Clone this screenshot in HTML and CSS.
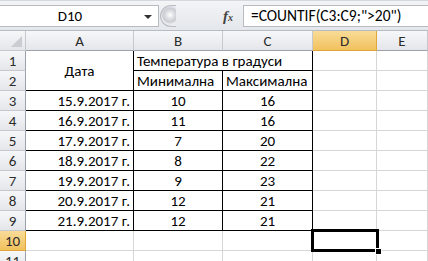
FILE: index.html
```html
<!DOCTYPE html>
<html lang="bg">
<head>
    <meta charset="UTF-8">
    <title>Excel - COUNTIF</title>
    <link rel="stylesheet" href="styles.css">
</head>
<body>
    <div class="formula-bar">
        <div class="name-box">
            <span class="name-value">D10</span>
            <span class="name-arrow"></span>
        </div>
        <div class="grip"></div>
        <div class="fx-area">
            <span class="fx">f<sub>x</sub></span>
        </div>
        <div class="formula-input">=COUNTIF(C3:C9;"&gt;20")</div>
    </div>

    <div class="sheet">
        <!-- column headers -->
        <div class="hdr corner"><span class="corner-tri"></span></div>
        <div class="hdr col">A</div>
        <div class="hdr col">B</div>
        <div class="hdr col">C</div>
        <div class="hdr col active">D</div>
        <div class="hdr col">E</div>

        <!-- rows 1-2 -->
        <div class="hdr row">1</div>
        <div class="cell center merged-a bl-r bl-b">Дата</div>
        <div class="cell merged-bc bl-r bl-b">Температура в градуси</div>
        <div class="cell"></div>
        <div class="cell"></div>

        <div class="hdr row">2</div>
        <div class="cell bl-r bl-b">Минимална</div>
        <div class="cell bl-r bl-b">Максимална</div>
        <div class="cell"></div>
        <div class="cell"></div>

        <div class="hdr row">3</div>
        <div class="cell right bl-r bl-b">15.9.2017 г.</div>
        <div class="cell center bl-r bl-b">10</div>
        <div class="cell center bl-r bl-b">16</div>
        <div class="cell"></div>
        <div class="cell"></div>

        <div class="hdr row">4</div>
        <div class="cell right bl-r bl-b">16.9.2017 г.</div>
        <div class="cell center bl-r bl-b">11</div>
        <div class="cell center bl-r bl-b">16</div>
        <div class="cell"></div>
        <div class="cell"></div>

        <div class="hdr row">5</div>
        <div class="cell right bl-r bl-b">17.9.2017 г.</div>
        <div class="cell center bl-r bl-b">7</div>
        <div class="cell center bl-r bl-b">20</div>
        <div class="cell"></div>
        <div class="cell"></div>

        <div class="hdr row">6</div>
        <div class="cell right bl-r bl-b">18.9.2017 г.</div>
        <div class="cell center bl-r bl-b">8</div>
        <div class="cell center bl-r bl-b">22</div>
        <div class="cell"></div>
        <div class="cell"></div>

        <div class="hdr row">7</div>
        <div class="cell right bl-r bl-b">19.9.2017 г.</div>
        <div class="cell center bl-r bl-b">9</div>
        <div class="cell center bl-r bl-b">23</div>
        <div class="cell"></div>
        <div class="cell"></div>

        <div class="hdr row">8</div>
        <div class="cell right bl-r bl-b">20.9.2017 г.</div>
        <div class="cell center bl-r bl-b">12</div>
        <div class="cell center bl-r bl-b">21</div>
        <div class="cell"></div>
        <div class="cell"></div>

        <div class="hdr row">9</div>
        <div class="cell right bl-r bl-b">21.9.2017 г.</div>
        <div class="cell center bl-r bl-b">12</div>
        <div class="cell center bl-r bl-b">21</div>
        <div class="cell"></div>
        <div class="cell"></div>

        <div class="hdr row active">10</div>
        <div class="cell"></div>
        <div class="cell"></div>
        <div class="cell"></div>
        <div class="cell selected"><span class="sel-box"><span class="fill-handle"></span></span></div>
        <div class="cell"></div>

        <div class="hdr row">11</div>
        <div class="cell"></div>
        <div class="cell"></div>
        <div class="cell"></div>
        <div class="cell"></div>
        <div class="cell"></div>
    </div>
</body>
</html>
```

FILE: styles.css
```css
body {
    margin: 0;
    width: 428px;
    height: 261px;
    overflow: hidden;
    background-color: #ffffff;
    font-family: 'Carlito', 'Noto Sans', 'DejaVu Sans', sans-serif;
    font-size: 15px;
    color: #000000;
}

.formula-bar {
    display: flex;
    height: 30px;
    box-sizing: border-box;
    padding-top: 4px;
    background: linear-gradient(#f3f4f6, #e4e7eb);
    border-top: 1px solid #d5d9de;
}

.name-box {
    position: relative;
    width: 159px;
    height: 22px;
    box-sizing: border-box;
    background-color: #ffffff;
    border: 1px solid #b8bcc2;
    border-left: none;
    display: flex;
    align-items: center;
    justify-content: center;
}

.name-value {
    font-size: 15px;
    margin-left: -18px;
}

.name-arrow {
    position: absolute;
    right: 6px;
    top: 9px;
    border-left: 4px solid transparent;
    border-right: 4px solid transparent;
    border-top: 4px solid #333;
}

.grip {
    width: 16px;
    height: 22px;
    margin-left: 1px;
    box-sizing: border-box;
    border-radius: 11px 0 0 11px;
    border: 1px solid #b8bcc2;
    border-right: none;
    background: radial-gradient(circle at 9px 9px, #ffffff 0, #dcdfe3 4px, #c9cdd2 7px, #e9ebee 9px);
}

.fx-area {
    width: 67px;
    height: 22px;
    display: flex;
    align-items: center;
    justify-content: flex-end;
    padding-right: 10px;
    box-sizing: border-box;
}

.fx {
    font-family: 'Liberation Serif', serif;
    font-style: italic;
    font-weight: bold;
    font-size: 15px;
    color: #444;
}

.fx sub {
    font-size: 10px;
    vertical-align: 0;
}

.formula-input {
    flex: 1;
    height: 22px;
    box-sizing: border-box;
    background-color: #ffffff;
    border: 1px solid #b8bcc2;
    border-right: none;
    padding-left: 7px;
    font-size: 15.5px;
    line-height: 20px;
}

.sheet {
    display: grid;
    grid-template-columns: 26px 108px 89px 90px 64px 51px;
    grid-auto-rows: 20px;
    border-top: 1px solid #b7bcc3;
}

.hdr {
    box-sizing: border-box;
    background: linear-gradient(#f6f7f9, #e4e6ea);
    border-right: 1px solid #c5c9cf;
    border-bottom: 1px solid #c5c9cf;
    display: flex;
    align-items: center;
    justify-content: center;
    color: #2b2b2b;
    font-size: 15px;
}

.hdr.col {
    border-bottom-color: #9ba2ab;
}

.hdr.row {
    border-right-color: #9ba2ab;
}

.hdr.active {
    background: linear-gradient(#f9dc98, #f1c15d);
    border-color: #e0a63a;
}

.corner {
    position: relative;
}

.corner-tri {
    position: absolute;
    right: 3px;
    bottom: 3px;
    border-left: 11px solid transparent;
    border-bottom: 11px solid #c9ccd1;
}

.cell {
    box-sizing: border-box;
    border-right: 1px solid #d6d6d6;
    border-bottom: 1px solid #d6d6d6;
    padding: 0 3px;
    display: flex;
    align-items: center;
    white-space: nowrap;
}

.center {
    justify-content: center;
}

.right {
    justify-content: flex-end;
}

.merged-a {
    grid-row: span 2;
}

.merged-bc {
    grid-column: span 2;
}

.bl-r {
    border-right-color: #000000;
}

.bl-b {
    border-bottom-color: #000000;
}

.selected {
    position: relative;
}

.sel-box {
    position: absolute;
    left: -2px;
    top: -2px;
    right: -3px;
    bottom: -2px;
    border: 3px solid #000000;
}

.fill-handle {
    position: absolute;
    right: -6px;
    bottom: -6px;
    width: 5px;
    height: 5px;
    background-color: #000000;
    border: 1px solid #ffffff;
}
```
